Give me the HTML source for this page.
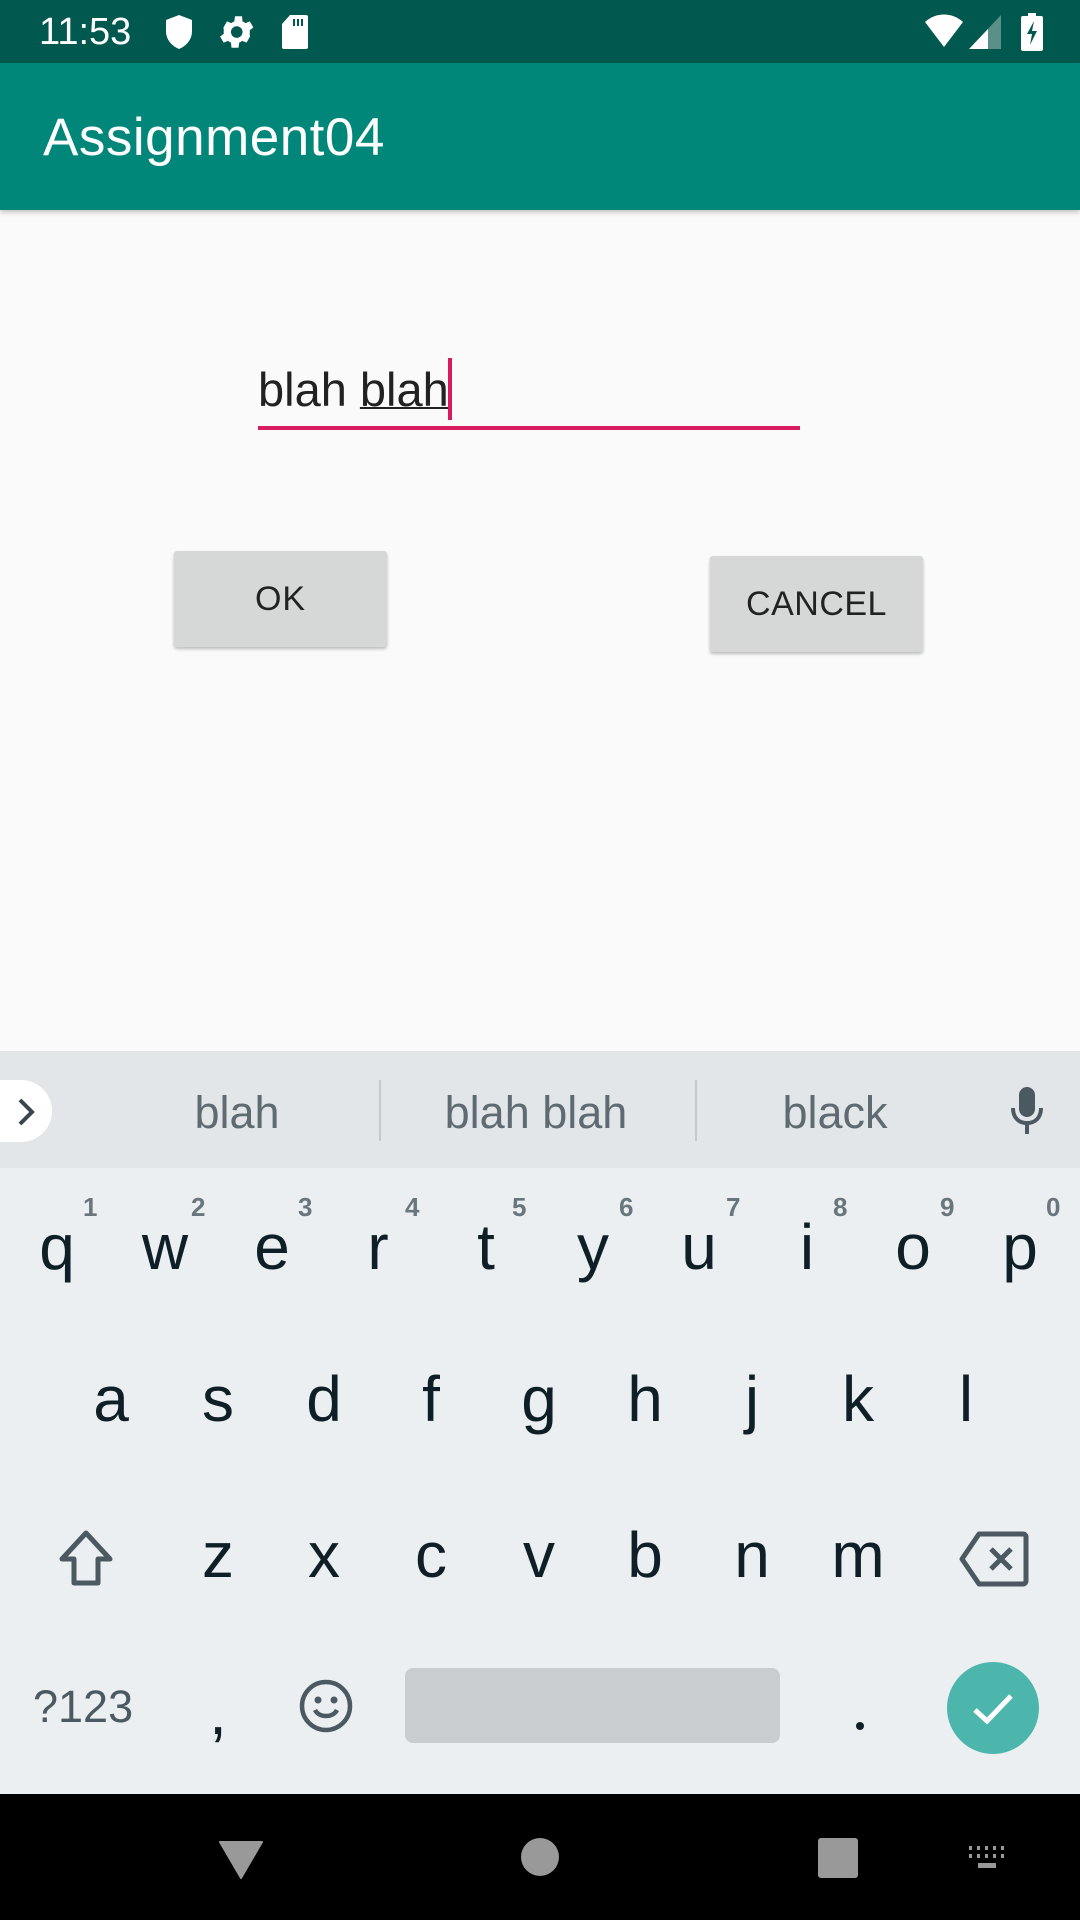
<!DOCTYPE html>
<html><head><meta charset="utf-8"><style>
*{margin:0;padding:0;box-sizing:border-box}
body{width:1080px;height:1920px;position:relative;overflow:hidden;background:#fafafa;font-family:"Liberation Sans",sans-serif}
.a{position:absolute}
.k{position:absolute;width:100px;margin-left:-50px;text-align:center;color:#0f1f28;font-size:64px;line-height:1}
.n{position:absolute;font-size:26px;color:#6a767d;line-height:1;font-weight:bold}
.s{position:absolute;color:#5f6b73;font-size:45px;line-height:1;text-align:center;width:300px;margin-left:-150px}
</style></head><body>
<div class="a" style="left:0;top:0;width:1080px;height:63px;background:#00584e"></div>
<div class="a" style="left:39px;top:13px;color:#fff;font-size:38px;line-height:1">11:53</div>
<svg class="a" style="left:164px;top:14px" width="30" height="36" viewBox="0 0 30 36"><path d="M15 1 L28 6 V17 C28 26 22 32 15 35 C8 32 2 26 2 17 V6 Z" fill="#fff"/></svg>
<svg class="a" style="left:214px;top:11px" width="42" height="42" viewBox="0 0 24 24"><path fill="#fff" d="M19.4 13a7.5 7.5 0 000-2l2.1-1.6-2-3.5-2.5 1a7 7 0 00-1.7-1L15 3h-4l-.4 2.9a7 7 0 00-1.7 1l-2.5-1-2 3.5L4.6 11a7.5 7.5 0 000 2l-2.1 1.6 2 3.5 2.5-1a7 7 0 001.7 1L9 21h4l.4-2.9a7 7 0 001.7-1l2.5 1 2-3.5zM12 15.3a3.3 3.3 0 110-6.6 3.3 3.3 0 010 6.6z" transform="translate(1 0)"/></svg>
<svg class="a" style="left:281px;top:14px" width="28" height="36" viewBox="0 0 28 36"><path d="M9 1 H25 a2 2 0 012 2 V33 a2 2 0 01-2 2 H3 a2 2 0 01-2-2 V10 Z" fill="#fff"/><rect x="12" y="5" width="2" height="7" fill="#00584e"/><rect x="16" y="5" width="2" height="7" fill="#00584e"/><rect x="20" y="5" width="2" height="7" fill="#00584e"/></svg>
<svg class="a" style="left:924px;top:14px" width="40" height="34" viewBox="0 0 40 34"><path d="M1 8 C12 -2 28 -2 39 8 L20 33 Z" fill="#fff"/></svg>
<svg class="a" style="left:968px;top:14px" width="34" height="36" viewBox="0 0 34 36"><path d="M33 1 V35 H1 Z" fill="#5a9089"/><path d="M20 15 V35 H1 L20 15Z" fill="#fff"/></svg>
<svg class="a" style="left:1020px;top:13px" width="24" height="38" viewBox="0 0 24 38"><rect x="8" y="0" width="8" height="4" fill="#fff"/><rect x="1" y="3" width="22" height="35" rx="2" fill="#fff"/><path d="M14 8 L7 21 H12 L10 32 L17 18 H12 Z" fill="#00584e"/></svg>
<div class="a" style="left:0;top:63px;width:1080px;height:147px;background:#00877a;box-shadow:0 2px 5px rgba(0,0,0,.25)"></div>
<div class="a" style="left:43px;top:111px;color:#fff;font-size:53px;line-height:1;letter-spacing:0.5px">Assignment04</div>
<div class="a" style="left:258px;top:366px;font-size:47px;color:#222;line-height:1">blah <span style="text-decoration:underline;text-decoration-thickness:2px">blah</span></div>
<div class="a" style="left:448px;top:358px;width:4px;height:62px;background:#d81b60"></div>
<div class="a" style="left:258px;top:426px;width:542px;height:4px;background:#d81b60"></div>
<div class="a" style="left:174px;top:551px;width:213px;height:96px;background:#d6d7d7;border-radius:3px;box-shadow:0 2px 3px rgba(0,0,0,.25);text-align:center;line-height:96px;font-size:34px;color:#222;letter-spacing:1px">OK</div>
<div class="a" style="left:710px;top:556px;width:213px;height:96px;background:#d6d7d7;border-radius:3px;box-shadow:0 2px 3px rgba(0,0,0,.25);text-align:center;line-height:96px;font-size:34px;color:#222;letter-spacing:0.5px">CANCEL</div>
<div class="a" style="left:0;top:1051px;width:1080px;height:117px;background:#e3e6e9"></div>
<div class="a" style="left:0;top:1168px;width:1080px;height:626px;background:#eceff1"></div>
<div class="a" style="left:-30px;top:1080px;width:82px;height:62px;background:#fff;border-radius:31px"></div>
<svg class="a" style="left:14px;top:1096px" width="24" height="32" viewBox="0 0 24 32"><path d="M6 4 L18 16 L6 28" stroke="#38464f" stroke-width="4" fill="none"/></svg>
<div class="s" style="left:237px;top:1090px">blah</div>
<div class="s" style="left:536px;top:1090px">blah blah</div>
<div class="s" style="left:835px;top:1090px">black</div>
<div class="a" style="left:379px;top:1080px;width:2px;height:61px;background:#c5c9cc"></div>
<div class="a" style="left:695px;top:1080px;width:2px;height:61px;background:#c5c9cc"></div>
<svg class="a" style="left:1009px;top:1086px" width="36" height="50" viewBox="0 0 36 50"><rect x="10" y="1" width="16" height="30" rx="8" fill="#4b5a62"/><path d="M4 22 C4 32 10 37 18 37 C26 37 32 32 32 22" stroke="#4b5a62" stroke-width="4" fill="none"/><rect x="16" y="36" width="4" height="12" fill="#4b5a62"/></svg>
<div class="k" style="left:57px;top:1215px">q</div><div class="n" style="left:83px;top:1194px">1</div>
<div class="k" style="left:165px;top:1215px">w</div><div class="n" style="left:191px;top:1194px">2</div>
<div class="k" style="left:272px;top:1215px">e</div><div class="n" style="left:298px;top:1194px">3</div>
<div class="k" style="left:378px;top:1215px">r</div><div class="n" style="left:405px;top:1194px">4</div>
<div class="k" style="left:486px;top:1215px">t</div><div class="n" style="left:512px;top:1194px">5</div>
<div class="k" style="left:593px;top:1215px">y</div><div class="n" style="left:619px;top:1194px">6</div>
<div class="k" style="left:699px;top:1215px">u</div><div class="n" style="left:726px;top:1194px">7</div>
<div class="k" style="left:807px;top:1215px">i</div><div class="n" style="left:833px;top:1194px">8</div>
<div class="k" style="left:913px;top:1215px">o</div><div class="n" style="left:940px;top:1194px">9</div>
<div class="k" style="left:1020px;top:1215px">p</div><div class="n" style="left:1046px;top:1194px">0</div>
<div class="k" style="left:111px;top:1367px">a</div>
<div class="k" style="left:218px;top:1367px">s</div>
<div class="k" style="left:324px;top:1367px">d</div>
<div class="k" style="left:431px;top:1367px">f</div>
<div class="k" style="left:539px;top:1367px">g</div>
<div class="k" style="left:645px;top:1367px">h</div>
<div class="k" style="left:752px;top:1367px">j</div>
<div class="k" style="left:858px;top:1367px">k</div>
<div class="k" style="left:966px;top:1367px">l</div>
<svg class="a" style="left:54px;top:1527px" width="64" height="64" viewBox="0 0 64 64"><path d="M32 6 L56 32 H44 V56 H20 V32 H8 Z" stroke="#4b5a62" stroke-width="5" fill="none" stroke-linejoin="round"/></svg>
<div class="k" style="left:218px;top:1523px">z</div>
<div class="k" style="left:324px;top:1523px">x</div>
<div class="k" style="left:431px;top:1523px">c</div>
<div class="k" style="left:539px;top:1523px">v</div>
<div class="k" style="left:645px;top:1523px">b</div>
<div class="k" style="left:752px;top:1523px">n</div>
<div class="k" style="left:858px;top:1523px">m</div>
<svg class="a" style="left:959px;top:1531px" width="70" height="56" viewBox="0 0 70 56"><path d="M20 3 H64 a3 3 0 013 3 V50 a3 3 0 01-3 3 H20 L3 28 Z" stroke="#4b5a62" stroke-width="5" fill="none" stroke-linejoin="round"/><path d="M32 18 L52 38 M52 18 L32 38" stroke="#4b5a62" stroke-width="5"/></svg>
<div class="a" style="left:33px;top:1684px;font-size:45px;color:#4b5a62;line-height:1">?123</div>
<div class="k" style="left:218px;top:1680px;color:#0f1f28">,</div>
<svg class="a" style="left:298px;top:1678px" width="56" height="56" viewBox="0 0 56 56"><circle cx="28" cy="28" r="24" stroke="#4b5a62" stroke-width="4.5" fill="none"/><circle cx="20" cy="22" r="3.5" fill="#4b5a62"/><circle cx="36" cy="22" r="3.5" fill="#4b5a62"/><path d="M17 32 C21 40 35 40 39 32" stroke="#4b5a62" stroke-width="4.5" fill="none"/></svg>
<div class="a" style="left:405px;top:1668px;width:375px;height:75px;background:#c9cdd0;border-radius:8px"></div>
<div class="a" style="left:856px;top:1722px;width:8px;height:8px;border-radius:4px;background:#0f1f28"></div>
<div class="a" style="left:947px;top:1662px;width:92px;height:92px;border-radius:46px;background:#4db6ac"></div>
<svg class="a" style="left:967px;top:1684px" width="52" height="48" viewBox="0 0 52 48"><path d="M8 26 L20 37 L44 12" stroke="#fff" stroke-width="5" fill="none"/></svg>
<div class="a" style="left:0;top:1794px;width:1080px;height:126px;background:#000"></div>
<svg class="a" style="left:218px;top:1840px" width="46" height="40" viewBox="0 0 46 40"><path d="M2 2 H44 L23 38 Z" fill="#999" stroke="#999" stroke-width="2" stroke-linejoin="round"/></svg>
<div class="a" style="left:521px;top:1838px;width:38px;height:38px;border-radius:19px;background:#999"></div>
<div class="a" style="left:818px;top:1838px;width:40px;height:40px;border-radius:3px;background:#999"></div>
<svg class="a" style="left:968px;top:1845px" width="42" height="28" viewBox="0 0 42 28"><g fill="#999"><rect x="1" y="1" width="3" height="4"/><rect x="9" y="1" width="3" height="4"/><rect x="17" y="1" width="3" height="4"/><rect x="25" y="1" width="3" height="4"/><rect x="33" y="1" width="3" height="4"/><rect x="1" y="9" width="3" height="4"/><rect x="9" y="9" width="3" height="4"/><rect x="17" y="9" width="3" height="4"/><rect x="25" y="9" width="3" height="4"/><rect x="33" y="9" width="3" height="4"/><rect x="10" y="18" width="18" height="5"/></g></svg>
</body></html>
